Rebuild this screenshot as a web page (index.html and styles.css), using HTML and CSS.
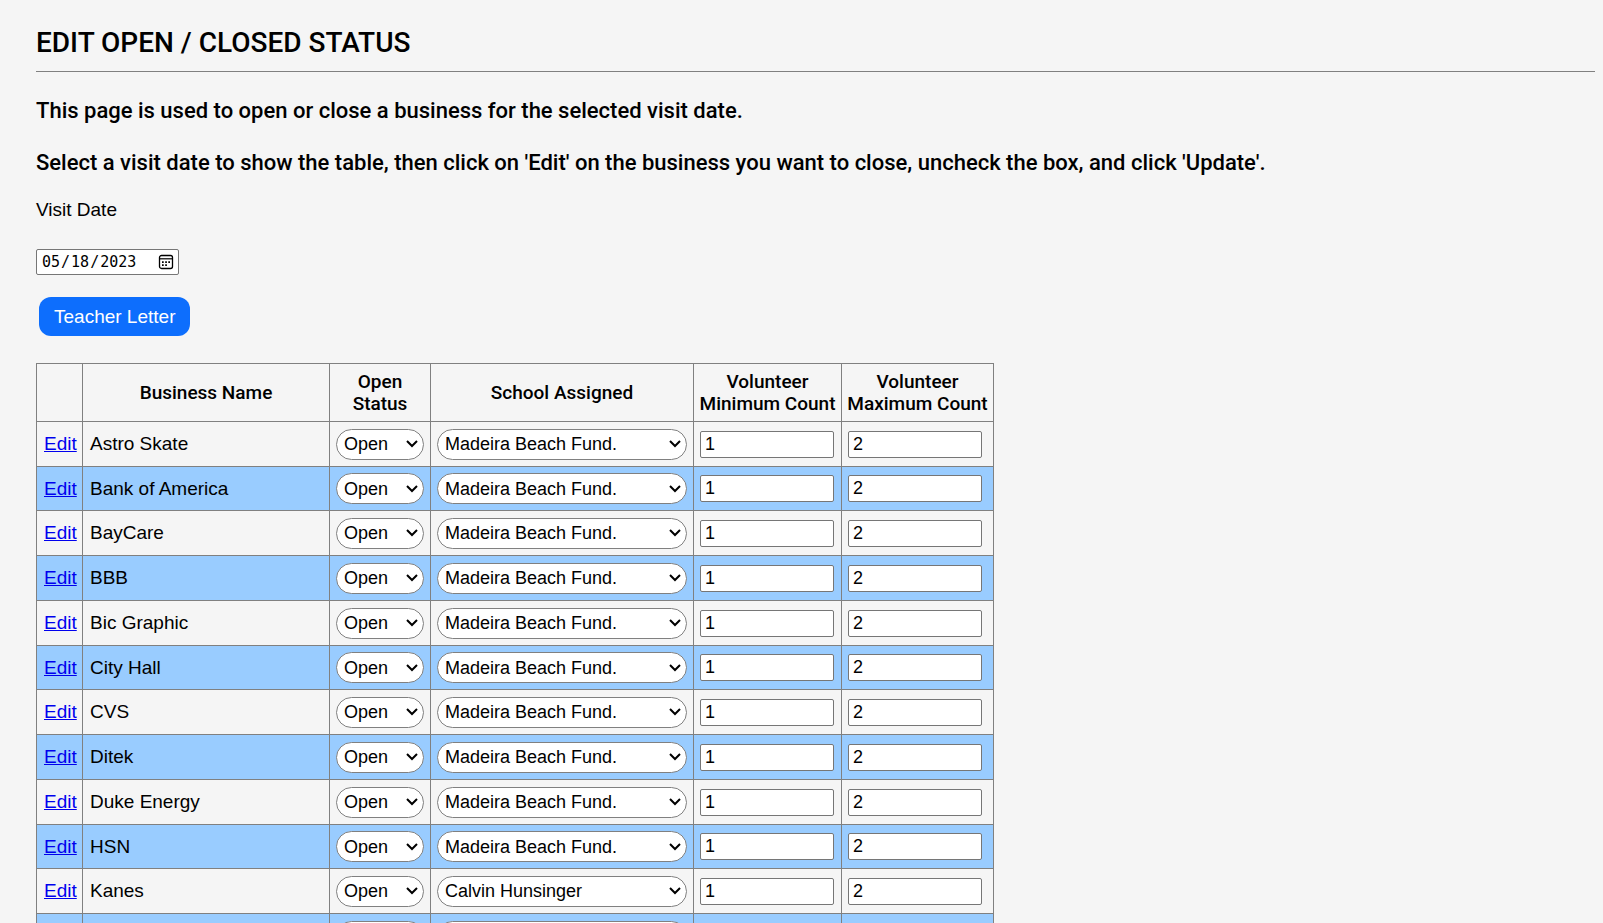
FILE: index.html
```html
<!DOCTYPE html>
<html lang="en-US">
<head>
<meta charset="utf-8">
<title>Edit Open / Closed Status</title>
<link rel="stylesheet" href="styles.css">
</head>
<body>
<main class="content">
<h2 class="title">EDIT OPEN / CLOSED STATUS</h2>
<hr class="rule">
<p class="intro">This page is used to open or close a business for the selected visit date.</p>
<p class="intro">Select a visit date to show the table, then click on 'Edit' on the business you want to close, uncheck the box, and click 'Update'.</p>
<form class="form">
<label class="date-label" for="visit">Visit Date</label>
<input class="date" id="visit" type="date" value="2023-05-18">
<button class="letter" type="button">Teacher Letter</button>
<table class="grid">
<colgroup><col class="c-edit"><col class="c-name"><col class="c-open"><col class="c-school"><col class="c-min"><col class="c-max"></colgroup>
<thead><tr><th></th><th>Business Name</th><th>Open Status</th><th>School Assigned</th><th>Volunteer Minimum Count</th><th>Volunteer Maximum Count</th></tr></thead>
<tbody>
<tr><td class="text"><a href="#">Edit</a></td><td class="text">Astro Skate</td><td><select class="pick" aria-label="Open status"><option>Open</option></select></td><td><select class="pick" aria-label="School assigned"><option>Madeira Beach Fund.</option></select></td><td><input class="count" aria-label="Minimum" value="1"></td><td><input class="count" aria-label="Maximum" value="2"></td></tr>
<tr><td class="text"><a href="#">Edit</a></td><td class="text">Bank of America</td><td><select class="pick" aria-label="Open status"><option>Open</option></select></td><td><select class="pick" aria-label="School assigned"><option>Madeira Beach Fund.</option></select></td><td><input class="count" aria-label="Minimum" value="1"></td><td><input class="count" aria-label="Maximum" value="2"></td></tr>
<tr><td class="text"><a href="#">Edit</a></td><td class="text">BayCare</td><td><select class="pick" aria-label="Open status"><option>Open</option></select></td><td><select class="pick" aria-label="School assigned"><option>Madeira Beach Fund.</option></select></td><td><input class="count" aria-label="Minimum" value="1"></td><td><input class="count" aria-label="Maximum" value="2"></td></tr>
<tr><td class="text"><a href="#">Edit</a></td><td class="text">BBB</td><td><select class="pick" aria-label="Open status"><option>Open</option></select></td><td><select class="pick" aria-label="School assigned"><option>Madeira Beach Fund.</option></select></td><td><input class="count" aria-label="Minimum" value="1"></td><td><input class="count" aria-label="Maximum" value="2"></td></tr>
<tr><td class="text"><a href="#">Edit</a></td><td class="text">Bic Graphic</td><td><select class="pick" aria-label="Open status"><option>Open</option></select></td><td><select class="pick" aria-label="School assigned"><option>Madeira Beach Fund.</option></select></td><td><input class="count" aria-label="Minimum" value="1"></td><td><input class="count" aria-label="Maximum" value="2"></td></tr>
<tr><td class="text"><a href="#">Edit</a></td><td class="text">City Hall</td><td><select class="pick" aria-label="Open status"><option>Open</option></select></td><td><select class="pick" aria-label="School assigned"><option>Madeira Beach Fund.</option></select></td><td><input class="count" aria-label="Minimum" value="1"></td><td><input class="count" aria-label="Maximum" value="2"></td></tr>
<tr><td class="text"><a href="#">Edit</a></td><td class="text">CVS</td><td><select class="pick" aria-label="Open status"><option>Open</option></select></td><td><select class="pick" aria-label="School assigned"><option>Madeira Beach Fund.</option></select></td><td><input class="count" aria-label="Minimum" value="1"></td><td><input class="count" aria-label="Maximum" value="2"></td></tr>
<tr><td class="text"><a href="#">Edit</a></td><td class="text">Ditek</td><td><select class="pick" aria-label="Open status"><option>Open</option></select></td><td><select class="pick" aria-label="School assigned"><option>Madeira Beach Fund.</option></select></td><td><input class="count" aria-label="Minimum" value="1"></td><td><input class="count" aria-label="Maximum" value="2"></td></tr>
<tr><td class="text"><a href="#">Edit</a></td><td class="text">Duke Energy</td><td><select class="pick" aria-label="Open status"><option>Open</option></select></td><td><select class="pick" aria-label="School assigned"><option>Madeira Beach Fund.</option></select></td><td><input class="count" aria-label="Minimum" value="1"></td><td><input class="count" aria-label="Maximum" value="2"></td></tr>
<tr><td class="text"><a href="#">Edit</a></td><td class="text">HSN</td><td><select class="pick" aria-label="Open status"><option>Open</option></select></td><td><select class="pick" aria-label="School assigned"><option>Madeira Beach Fund.</option></select></td><td><input class="count" aria-label="Minimum" value="1"></td><td><input class="count" aria-label="Maximum" value="2"></td></tr>
<tr><td class="text"><a href="#">Edit</a></td><td class="text">Kanes</td><td><select class="pick" aria-label="Open status"><option>Open</option></select></td><td><select class="pick" aria-label="School assigned"><option>Calvin Hunsinger</option></select></td><td><input class="count" aria-label="Minimum" value="1"></td><td><input class="count" aria-label="Maximum" value="2"></td></tr>
<tr><td></td><td></td><td><select class="pick" aria-label="Open status"><option></option></select></td><td><select class="pick" aria-label="School assigned"><option></option></select></td><td><input class="count" aria-label="Minimum"></td><td><input class="count" aria-label="Maximum"></td></tr>
</tbody>
</table>
</form>
</main>
</body>
</html>
```

FILE: styles.css
```css
* { box-sizing: border-box; }
html { scrollbar-width: none; }
body {
  margin: 0;
  background: #f5f5f5;
  color: #000;
  font: 19px/22px "Liberation Sans", Arial, sans-serif;
}
.content { padding: 24px 8px 0 36px; }
.title {
  margin: 0 0 9px;
  font: 500 28px/38px Roboto, "Liberation Sans", sans-serif;
}
.rule { height: 1px; margin: 0 0 25px; border: 0; background: #808080; }
.intro {
  margin: 0 0 24px;
  font: 500 22px/28px Roboto, "Liberation Sans", sans-serif;
}
.intro:last-of-type { margin-bottom: 22px; }
.form { display: flex; flex-direction: column; align-items: flex-start; }
.date-label { margin-bottom: 28px; }
.date {
  width: 143px;
  height: 26px;
  margin: 0 0 22px;
  padding: 0 4px;
  border: 1px solid #767676;
  border-radius: 2px;
  background: #fff;
  color: #000;
  font: 15px/22px "DejaVu Sans Mono", monospace;
}
.date::-webkit-calendar-picker-indicator {
  width: 16px;
  height: 16px;
  margin: 0;
  padding: 0;
  background: url("data:image/svg+xml,%3Csvg xmlns='http://www.w3.org/2000/svg' viewBox='0 0 16 16'%3E%3Crect x='1.5' y='1.5' width='13' height='13' rx='2' fill='none' stroke='%23000' stroke-width='1.3'/%3E%3Cpath d='M1.5 4.8h13' stroke='%23000' stroke-width='1.2'/%3E%3Cpath d='M4 7.2h1.7v1.7H4zM7.2 7.2h1.7v1.7H7.2zM10.3 7.2h1.7v1.7h-1.7zM4 10.3h1.7V12H4zM7.2 10.3h1.7V12H7.2z'/%3E%3C/svg%3E") center / 16px no-repeat;
}
.letter {
  height: 39px;
  margin: 0 0 27px 3px;
  padding: 0 15px;
  border: 0;
  border-radius: 12px;
  background: #0d6efd;
  color: #fff;
  font: 19px/22px "Liberation Sans", Arial, sans-serif;
}
.grid { width: 958px; table-layout: fixed; border-collapse: collapse; }
.c-edit { width: 46px; }
.c-name { width: 247px; }
.c-open { width: 101px; }
.c-school { width: 263px; }
.c-min { width: 148px; }
.c-max { width: 152px; }
.grid th, .grid td { border: 1px solid #808080; }
.grid th {
  height: 58px;
  padding: 0 4px;
  font: 500 19px/22px Roboto, "Liberation Sans", sans-serif;
}
.grid td { height: 45px; padding: 0 6px; }
.grid .text { padding: 0 0 0 7px; }
.grid tbody tr:nth-child(4n+2) td { height: 44px; }
.grid tbody tr:nth-child(even) { background: #99ccff; }
.grid a { color: #0000ee; }
.pick {
  appearance: none;
  display: block;
  width: 100%;
  height: 31px;
  padding: 0 20px 0 7px;
  border: 1px solid #808080;
  border-radius: 16px;
  background: #fff url("data:image/svg+xml,%3Csvg xmlns='http://www.w3.org/2000/svg' viewBox='0 0 12 8'%3E%3Cpath d='M1 1l5 5 5-5' fill='none' stroke='%23000' stroke-width='2'/%3E%3C/svg%3E") right 5px center / 12px 8px no-repeat;
  color: #000;
  font: 18px/22px "Liberation Sans", Arial, sans-serif;
}
.count {
  display: block;
  width: 134px;
  height: 27px;
  padding: 0 4px;
  border: 1px solid #767676;
  border-radius: 2px;
  background: #fff;
  color: #000;
  font: 18px/22px "Liberation Sans", Arial, sans-serif;
}
```
